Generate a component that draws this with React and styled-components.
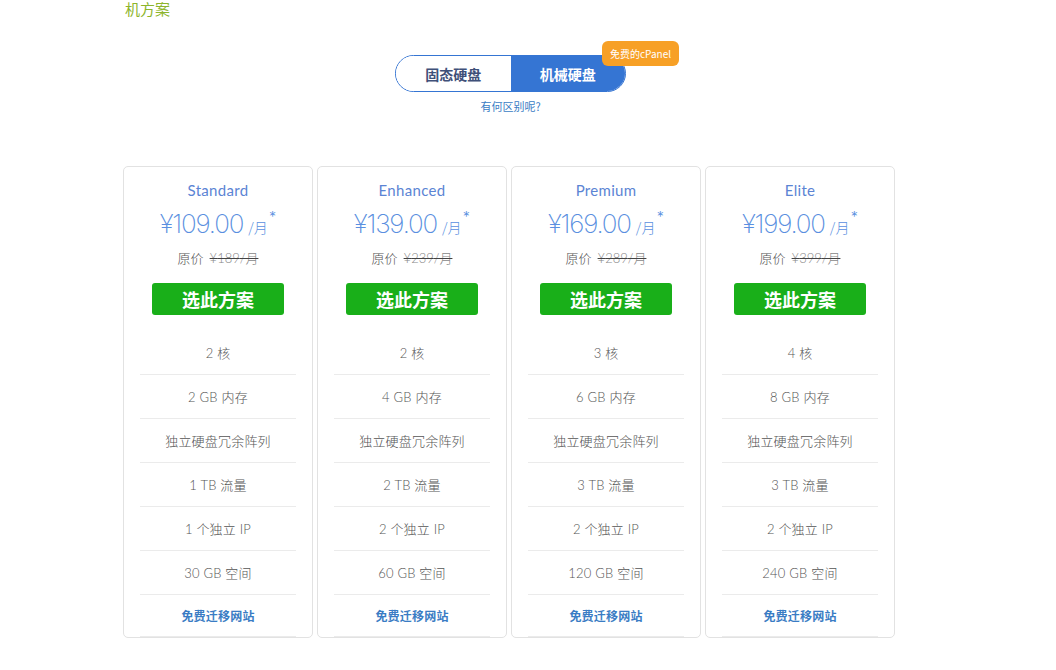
import React from 'react';
import styled, { createGlobalStyle } from 'styled-components';

const GlobalStyle = createGlobalStyle`
  html, body {
    margin: 0;
    padding: 0;
    background: #fff;
    font-family: Lato, "Noto Sans CJK SC", sans-serif;
  }
`;

const Page = styled.div`
  width: 772px;
  margin-left: 123px;
  padding-bottom: 30px;
`;

const SectionTitle = styled.div`
  margin-left: 2px;
  height: 17px;
  line-height: 17px;
  font-size: 15px;
  font-weight: 400;
  color: #8db52c;
  font-family: "Noto Sans CJK SC", sans-serif;
`;

const SwitchArea = styled.div`
  display: flex;
  flex-direction: column;
  align-items: center;
  margin-top: 38px;
  padding-left: 3px;
`;

const SwitchWrap = styled.div`
  position: relative;
`;

const Switch = styled.div`
  display: flex;
  width: 231px;
  height: 37px;
  border: 1px solid #3575d3;
  border-radius: 19px;
  overflow: hidden;
  box-sizing: border-box;
`;

const SwitchOption = styled.div`
  flex: 1;
  display: flex;
  align-items: center;
  justify-content: center;
  font-family: "Noto Sans CJK SC", sans-serif;
  font-size: 14px;
  font-weight: 700;
  background: ${({ active }) => (active ? '#3575d3' : '#fff')};
  color: ${({ active }) => (active ? '#fff' : '#3f5079')};
`;

const Badge = styled.div`
  position: absolute;
  left: 207px;
  top: -14px;
  height: 25px;
  padding: 0 8px;
  display: flex;
  align-items: center;
  background: #f7a026;
  color: #fff;
  border-radius: 6px;
  font-size: 10px;
  font-family: "Noto Sans CJK SC", sans-serif;
  white-space: nowrap;
`;

const DiffLink = styled.div`
  margin-top: 6px;
  font-size: 11px;
  color: #3a7cc4;
  font-family: "Noto Sans CJK SC", sans-serif;
`;

const Grid = styled.div`
  display: grid;
  grid-template-columns: repeat(4, 190px);
  column-gap: 4px;
  margin-top: 52px;
`;

const Card = styled.div`
  border: 1px solid #e2e2e2;
  border-radius: 5px;
  padding: 13px 16px 0;
  display: flex;
  flex-direction: column;
  align-items: center;
`;

const PlanName = styled.div`
  font-size: 15px;
  line-height: 20px;
  color: #5b84d4;
  letter-spacing: 0.3px;
`;

const Price = styled.div`
  margin-top: 8px;
  display: flex;
  align-items: flex-start;
  color: #5a8fe0;
  height: 32px;
`;

const Amount = styled.span`
  font-family: Inter, Lato, sans-serif;
  font-size: 26px;
  font-weight: 200;
  line-height: 32px;
  letter-spacing: -1.2px;
`;

const Unit = styled.span`
  font-size: 14px;
  margin-left: 5px;
  margin-top: 9px;
  font-family: "Noto Sans CJK SC", sans-serif;
  font-weight: 300;
`;

const Star = styled.span`
  font-size: 18px;
  line-height: 18px;
  margin-left: 1px;
`;

const OldPrice = styled.div`
  margin-top: 9px;
  font-size: 13px;
  line-height: 18px;
  color: #555;
  font-weight: 300;
  font-family: Lato, "Noto Sans CJK SC", sans-serif;
`;

const Struck = styled.span`
  margin-left: 6px;
  color: #888;
  text-decoration: line-through;
  text-decoration-color: #444;
`;

const SelectButton = styled.button`
  margin-top: 16px;
  width: 132px;
  height: 32px;
  border: none;
  border-radius: 3px;
  background: #19af19;
  color: #fff;
  font-family: "Noto Sans CJK SC", sans-serif;
  font-size: 18px;
  font-weight: 700;
  cursor: pointer;
  padding: 0;
`;

const Features = styled.ul`
  list-style: none;
  margin: 16px 0 0;
  padding: 0;
  width: 100%;
`;

const Feature = styled.li`
  height: 43px;
  display: flex;
  align-items: center;
  justify-content: center;
  border-bottom: 1px solid #ebebeb;
  font-size: 13px;
  color: #555;
  font-weight: 300;
  font-family: Lato, "Noto Sans CJK SC", sans-serif;
  letter-spacing: 0.2px;
`;

const Migrate = styled(Feature)`
  height: 41px;
  font-size: 12px;
  font-weight: 700;
  color: #3a7cc4;
  font-family: "Noto Sans CJK SC", sans-serif;
`;

const plans = [
  { name: 'Standard', price: '109.00', old: '189', cores: 2, ram: 2, traffic: 1, ip: 1, disk: 30 },
  { name: 'Enhanced', price: '139.00', old: '239', cores: 2, ram: 4, traffic: 2, ip: 2, disk: 60 },
  { name: 'Premium', price: '169.00', old: '289', cores: 3, ram: 6, traffic: 3, ip: 2, disk: 120 },
  { name: 'Elite', price: '199.00', old: '399', cores: 4, ram: 8, traffic: 3, ip: 2, disk: 240 },
];

const App = () => (
  <>
    <GlobalStyle />
    <Page>
      <SectionTitle>机方案</SectionTitle>
      <SwitchArea>
        <SwitchWrap>
          <Switch>
            <SwitchOption>固态硬盘</SwitchOption>
            <SwitchOption active>机械硬盘</SwitchOption>
          </Switch>
          <Badge>免费的cPanel</Badge>
        </SwitchWrap>
        <DiffLink>有何区别呢?</DiffLink>
      </SwitchArea>
      <Grid>
        {plans.map((p) => (
          <Card key={p.name}>
            <PlanName>{p.name}</PlanName>
            <Price>
              <Amount>¥{p.price}</Amount>
              <Unit>/月</Unit>
              <Star>*</Star>
            </Price>
            <OldPrice>
              原价<Struck>¥{p.old}/月</Struck>
            </OldPrice>
            <SelectButton>选此方案</SelectButton>
            <Features>
              <Feature>{p.cores} 核</Feature>
              <Feature>{p.ram} GB 内存</Feature>
              <Feature>独立硬盘冗余阵列</Feature>
              <Feature>{p.traffic} TB 流量</Feature>
              <Feature>{p.ip} 个独立 IP</Feature>
              <Feature>{p.disk} GB 空间</Feature>
              <Migrate>免费迁移网站</Migrate>
            </Features>
          </Card>
        ))}
      </Grid>
    </Page>
  </>
);

export default App;
